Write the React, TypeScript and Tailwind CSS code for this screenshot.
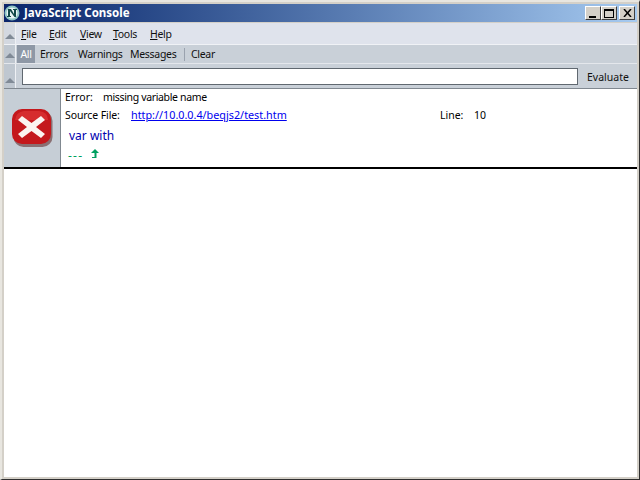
import { ReactNode } from "react";

const font = { fontFamily: '"Noto Sans", "DejaVu Sans", sans-serif' };

function Grippy({ className }: { className: string }) {
    return (
        <div className={`w-[12px] shrink-0 flex items-end justify-center pb-[5px] border-r border-[#eef0f4] ${className}`}>
            <div className="w-0 h-0 border-x-[5px] border-x-transparent border-b-[5px] border-b-[#808a96]" />
        </div>
    );
}

function MenuItem({ letter, rest, width }: { letter: string; rest: string; width: string }) {
    return (
        <span className={`${width} pt-[1px] tracking-[-0.3px]`}>
            <span className="underline">{letter}</span>
            {rest}
        </span>
    );
}

function CaptionButton({ children }: { children: ReactNode }) {
    return (
        <div className="w-[16px] h-[14px] flex items-center justify-center bg-[#d4d0c8] border-t border-l border-t-white border-l-white border-r border-b border-r-[#404040] border-b-[#404040]">
            {children}
        </div>
    );
}

function ErrorIcon() {
    return (
        <svg width="41" height="38" viewBox="0 0 41 38">
            <rect x="1.500" y="2" width="39" height="36" rx="10" fill="#5a2020" opacity="0.55" />
            <rect x="0" y="0" width="39" height="35" rx="10" fill="#c4181c" />
            <path d="M3 11 Q4 3 12 2 L27 2 Q36 3 36 11 Z" fill="#e23a3a" opacity="0.6" />
            <path d="M10 7 L19.500 14 L29 7 L33 11 L24 18 L33 25 L29 29 L19.500 22 L10 29 L6 25 L15 18 L6 11 Z" fill="#fbf4f0" />
        </svg>
    );
}

export default function App() {
    return (
        <div style={font} className="w-[640px] h-[480px] bg-[#d4d0c8] border-t-2 border-l-2 border-t-[#e8e6e0] border-l-[#e8e6e0] border-r border-b border-r-[#303030] border-b-[#303030] p-[2px] flex flex-col overflow-hidden text-[10.500px] text-black leading-none">
            {/* Title bar */}
            <div className="h-[18px] shrink-0 flex items-center pr-[2px] bg-gradient-to-r from-[#0a246a] to-[#a6caf0]">
                <svg width="16" height="16" viewBox="0 0 16 16">
                    <circle cx="8" cy="8" r="7.500" fill="#8fc4c4" />
                    <circle cx="8" cy="8" r="5.500" fill="#e8f4f4" />
                    <path d="M4 4 H7 L10 9 V5 H9 V4 H13 V5 H12 V12 H10.500 L6 6 V11 H7 V12 H3 V11 H4 Z" fill="#104848" />
                </svg>
                <span className="ml-[4px] text-white font-bold text-[11.500px]">JavaScript Console</span>
                <div className="ml-auto flex">
                    <CaptionButton>
                        <div className="w-[7px] h-[2px] bg-black mt-[7px] mr-[2px]" />
                    </CaptionButton>
                    <CaptionButton>
                        <div className="w-[10px] h-[9px] border border-t-2 border-black" />
                    </CaptionButton>
                    <div className="ml-[2px]">
                        <CaptionButton>
                            <svg width="9" height="8" viewBox="0 0 9 8">
                                <path d="M1 0 L8 8 M8 0 L1 8" stroke="black" strokeWidth="1.500" />
                            </svg>
                        </CaptionButton>
                    </div>
                </div>
            </div>

            {/* Menu bar */}
            <div className="mt-[1px] h-[22px] shrink-0 flex bg-[#dfe3ec] border-b border-[#f0f2f6]">
                <Grippy className="bg-[#d3d8e0]" />
                <div className="flex items-center pl-[5px] text-[#101010]">
                    <MenuItem letter="F" rest="ile" width="w-[28px]" />
                    <MenuItem letter="E" rest="dit" width="w-[31px]" />
                    <MenuItem letter="V" rest="iew" width="w-[33px]" />
                    <MenuItem letter="T" rest="ools" width="w-[37px]" />
                    <MenuItem letter="H" rest="elp" width="w-[30px]" />
                </div>
            </div>

            {/* Filter toolbar */}
            <div className="h-[19px] shrink-0 flex bg-[#c9d0d8] border-b border-[#e4e7ec]">
                <Grippy className="bg-[#bfc7d0]" />
                <div className="flex items-center text-[#101010] h-full tracking-[-0.3px]">
                    <span className="ml-[1px] w-[18px] bg-[#8e98a6] text-white h-full flex items-center justify-center">All</span>
                    <span className="ml-[5px] pt-[1px] w-[38px]">Errors</span>
                    <span className="pt-[1px] w-[52px]">Warnings</span>
                    <span className="pt-[1px] w-[54px]">Messages</span>
                    <div className="w-px h-[13px] bg-[#9aa2ae]" />
                    <span className="ml-[6px] pt-[1px]">Clear</span>
                </div>
            </div>

            {/* Evaluate row */}
            <div className="h-[25px] shrink-0 flex bg-[#c9d0d8] border-b border-[#808890]">
                <Grippy className="bg-[#bfc7d0]" />
                <div className="flex-1 flex items-center pl-[6px]">
                    <div className="w-[556px] h-[17px] bg-white border border-[#606870]" />
                    <span className="ml-[9px] pt-[2px] text-[#101010]">Evaluate</span>
                </div>
            </div>

            {/* Console output */}
            <div className="flex-1 bg-white flex flex-col">
                <div className="h-[80px] shrink-0 flex border-b-2 border-black">
                    <div className="w-[57px] shrink-0 bg-[#c6ced6] border-r border-[#808890] flex items-center pl-[8px]">
                        <ErrorIcon />
                    </div>
                    <div className="flex-1 pl-[4px]">
                        <div className="flex h-[16px] items-center">
                            <span className="w-[38px]">Error:</span>
                            <span className="tracking-[-0.35px]">missing variable name</span>
                        </div>
                        <div className="flex h-[20px] items-center">
                            <span className="w-[66px] tracking-[-0.1px]">Source File:</span>
                            <span className="text-[#0000ee] underline w-[309px] text-[10.800px]">http://10.0.0.4/beqjs2/test.htm</span>
                            <span className="w-[34px]">Line:</span>
                            <span>10</span>
                        </div>
                        <div className="pl-[4px] mt-[5px] text-[#0000b0] text-[12px]">var with</div>
                        <div className="pl-[3px] mt-[8px] flex items-center text-[#00a060] h-[12px]">
                            <span className="tracking-[1.200px] text-[12px]">---</span>
                            <svg className="ml-[7px] -mt-[3px]" width="9" height="11" viewBox="0 0 9 11">
                                <path d="M5 0 L9 4 H6.500 V9 H2 V8 H4.500 V4 H1 Z" fill="#00a060" />
                            </svg>
                        </div>
                    </div>
                </div>
            </div>
        </div>
    );
}
